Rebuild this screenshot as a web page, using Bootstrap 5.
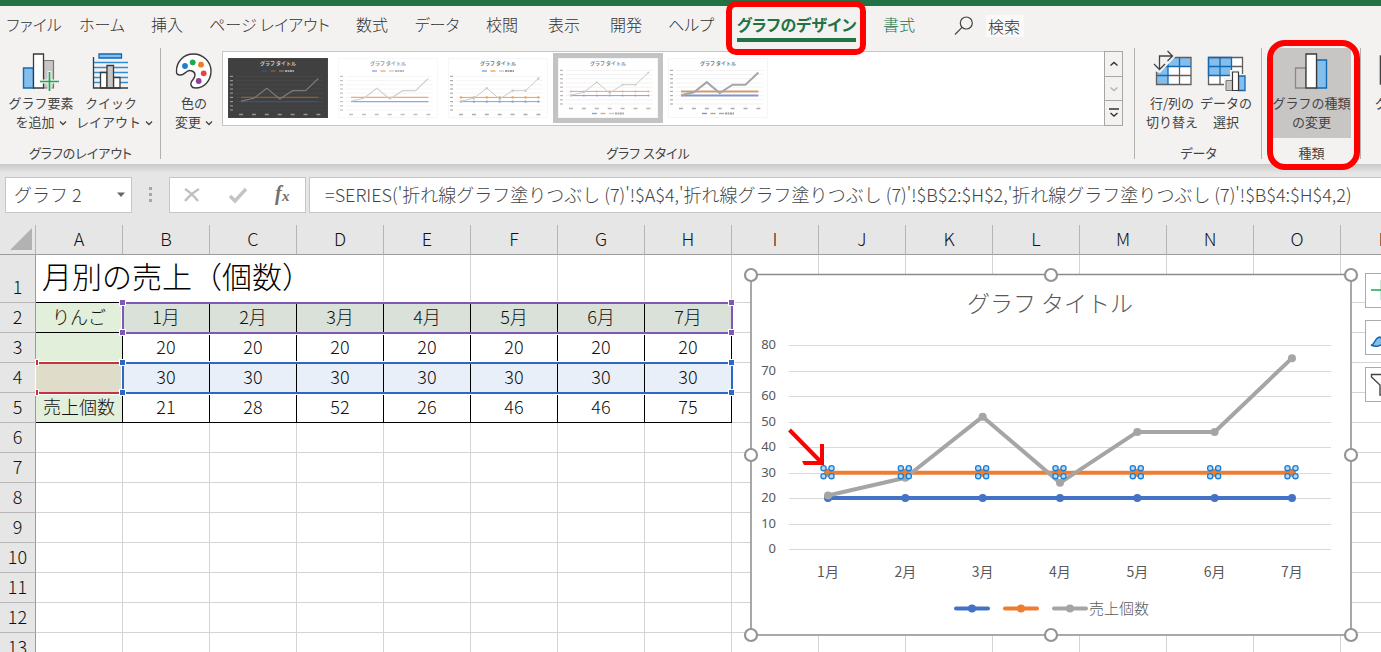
<!DOCTYPE html>
<html lang="ja">
<head>
<meta charset="utf-8">
<meta name="viewport" content="width=device-width, initial-scale=1">
<title>グラフのデザイン</title>
<link href="https://cdn.jsdelivr.net/npm/bootstrap@5.3.0/dist/css/bootstrap.min.css" rel="stylesheet">
<style>
:root{--green:#217346;--ink:#444;--line:#d4d4d4}
body{font-family:"Noto Sans CJK JP",sans-serif;font-weight:300;color:var(--ink);background:#fff}
.topbar{height:6px;background:var(--green)}
.tabs{height:42px;background:#f3f2f1;font-size:16px;font-feature-settings:"palt"}
.tabs li{flex:none;position:relative;text-align:center}
.tab-s{width:62px}.tab-m{width:68px}.tab-l{width:143px}
.tabs a{display:inline-block;color:#333;text-decoration:none;white-space:nowrap;line-height:28px;margin-top:4px}
.tabs a.accent{color:var(--green)}
.tabs a.current{font-weight:700;border-bottom:4px solid var(--green)}
.find{margin-left:24px;padding-top:5px;gap:12px}
.find input{width:38px;height:22px;padding:0 2px;border:0;border-radius:0;background:#faf9f8;font-size:16px;font-weight:300;line-height:22px}
.find input::placeholder{color:#333;opacity:1}
.mark-box{position:absolute;border:6px solid #f00;pointer-events:none;z-index:5}
.mark-tab{inset:-5px 2px -7px 1px;border-radius:10px}
.mark-group{inset:-8px 1px -6px 5px;border-radius:18px}
.ribbon{height:116px;background:#f3f2f1;font-size:13px;font-weight:400;font-feature-settings:"palt"}
.grp{position:relative;flex:none}
.grp:not(:last-child)::after{content:"";position:absolute;right:0;top:0;bottom:5px;width:1px;background:#b3b0ad}
.grp-title{line-height:22px;text-align:center;white-space:nowrap}
.tools-in{padding-left:6px}
.tools-far{padding-left:10px}
.tool{height:90px;border:0;background:none;padding:2px 0 7px;color:var(--ink);line-height:19px;white-space:nowrap}
.tool svg{display:block;margin:0 auto 1px;width:40px;height:42px}
.tool .chev{display:inline-block;width:8px;height:6px;margin:0 0 1px 4px}
.w-wide{width:70px}.w-slim{width:54px}
.tool.on{width:79px;background:#c8c6c4}
.gallery{height:75px;margin:3px 12px 0 1px;border:1px solid #c8c6c4;background:#fff;min-width:0}
.gallery .items{min-width:0;overflow:hidden}
.thumb{flex:none;width:110px;padding:0;border:5px solid transparent;background:none;height:70px;margin-top:1px}
.thumb.sel{border-color:#c3c3c3}
.thumb svg{display:block}
.spin{width:19px;flex:none;margin:-1px}
.spin button{flex:1;border:1px solid #a8a6a4;border-top-width:0;background:#f3f2f1;padding:0;line-height:0}
.spin button:first-child{border-top-width:1px}
.fbar{height:61px;background:linear-gradient(#c9c9c9,#e6e6e6 9px);padding:13px 0 12px 5px;font-size:18px}
.fbox{border:1px solid #c6c6c6;background:#fff;height:36px}
.fbar input{border:0;outline:0;background:none;color:var(--ink);padding:0 0 2px;min-width:0;font-weight:300}
.formula{padding-left:15px;margin-left:3px;min-width:0}
.namebox{width:127px}
.dots{width:37px}
.fx{width:137px}
.fx button{border:0;background:none;padding:0;width:36px;line-height:0}
.sheet{position:relative;overflow:hidden;background:#fff}
.cells{border-collapse:separate;border-spacing:0;table-layout:fixed;width:1428px;color:#111;font-size:18px;line-height:27px}
.cells th,.cells td{padding:0 0 2px;text-align:center;border:solid var(--line);border-width:0 1px 1px 0;height:30px;font-weight:300;white-space:nowrap}
.cells thead th{background:#e6e6e6;border-color:#9b9b9b;border-right-color:#b5b5b5}
.cells tbody th{background:#e6e6e6;border-right-color:#9b9b9b;border-bottom-color:#b8b8b8}
.cells .first td,.cells .first th{height:48px;vertical-align:bottom}
.cells td.heading{font-size:30px;line-height:40px;text-align:left;padding:0 0 0 6px;vertical-align:top!important;color:#000}
.cells .first td.edge,.cells td.data{border-bottom-color:#000}
.cells td.data{border-right-color:#000}
.cells td.name{background:#e2efda}
.cells td.month{background:#d9e1d9}
.cells td.hit{background:#e9eff9}
.cells td.key{background:#dfdcc9}
.corner svg{display:block;margin-left:10px}
.range{position:absolute;height:32px;border:2px solid;outline:1px solid #fff}
.range i{position:absolute;width:5px;height:5px;background:currentColor;outline:1px solid #fff}
.range i:nth-child(1){left:-4px;top:-4px}.range i:nth-child(2){left:-4px;bottom:-3px}
.range i:nth-child(3){right:-3px;top:-4px}.range i:nth-child(4){right:-3px;bottom:-3px}
.r-months{left:122px;top:77px;width:611px;color:#7f57b5}
.r-values{left:122px;top:137px;width:611px;color:#2e68c5}
.r-key{left:36px;top:137px;width:86px;color:#c03540;border-left:0;border-right:0}
.range.r-key i{left:0;width:2px}
.chart{position:absolute;left:740px;top:39px}
.chart text{fill:#595959}
.side{position:absolute;left:1365px;top:48px;gap:12px}
.side button{width:35px;height:35px;border:1px solid #ababab;background:#fff;padding:0}
</style>
</head>
<body class="vh-100 d-flex flex-column overflow-hidden">
<div class="topbar flex-shrink-0"></div>
<nav class="tabs d-flex flex-shrink-0">
  <ul class="list-unstyled d-flex m-0">
    <li class="tab-m"><a href="#">ファイル</a></li>
    <li class="tab-m"><a href="#">ホーム</a></li>
    <li class="tab-s"><a href="#">挿入</a></li>
    <li class="tab-l"><a href="#">ページ レイアウト</a></li>
    <li class="tab-s"><a href="#">数式</a></li>
    <li class="tab-m"><a href="#">データ</a></li>
    <li class="tab-s"><a href="#">校閲</a></li>
    <li class="tab-s"><a href="#">表示</a></li>
    <li class="tab-s"><a href="#">開発</a></li>
    <li class="tab-m"><a href="#">ヘルプ</a></li>
    <li class="tab-l"><a href="#" class="accent current">グラフのデザイン</a><span class="mark-box mark-tab"></span></li>
    <li class="tab-s"><a href="#" class="accent">書式</a></li>
  </ul>
  <div class="find d-flex align-items-start">
    <svg width="20" height="22" viewBox="0 0 20 22" fill="none" stroke="#444" stroke-width="1.2" class="mt-1"><circle cx="12.300" cy="8" r="6"/><path d="M8 12.300 1 19.500"/></svg>
    <input type="text" placeholder="検索" aria-label="検索" class="mt-1">
  </div>
</nav>

<div class="ribbon d-flex flex-shrink-0">
  <section class="grp d-flex flex-column justify-content-between" style="width:161px">
    <div class="d-flex tools-in">
      <button class="tool w-wide"><svg viewBox="0 -2 40 42"><path d="M2.500 16h10v20h-10z" fill="#83beec" stroke="#1268b3" stroke-width="1.400"/><path d="M22.500 8.500h10V36h-10z" fill="#c8c6c4" stroke="#797774" stroke-width="1.200"/><path d="M12.500 2h10v34h-10z" fill="#fff" stroke="#3b3a39" stroke-width="1.300"/><path d="M28.500 19v20M18.500 29.500h20" stroke="#f3f2f1" stroke-width="4"/><path d="M28.500 20v19M19 29.500h19" stroke="#18ab50" stroke-width="1.700"/></svg>グラフ要素<br>を追加<svg class="chev" viewBox="0 0 8 6" fill="none" stroke="#444" stroke-width="1.300"><path d="m1 1.500 3 3 3-3"/></svg></button>
      <button class="tool w-wide"><svg viewBox="0 -2 40 42"><path d="M3 10.500h34M3 15.500h34M3 20.500h34M3 25.500h34M3 30.500h34" stroke="#2e8fd8" stroke-width="1.500"/><path d="M8 2h22.500v4H8z" fill="#83beec" stroke="#1268b3" stroke-width="1.300"/><g stroke="#3b3a39" stroke-width="1.300" fill="#fff"><path d="M9.500 20.500h6.500V36H9.500zM22.500 25.500h6.500V36h-6.500z"/><path d="M16 13.500h6.500V36H16z" fill="#c8c6c4"/><path d="M2.500 5v31H37" fill="none"/></g></svg>クイック<br>レイアウト<svg class="chev" viewBox="0 0 8 6" fill="none" stroke="#444" stroke-width="1.300"><path d="m1 1.500 3 3 3-3"/></svg></button>
    </div>
    <div class="grp-title">グラフのレイアウト</div>
  </section>

  <section class="grp d-flex flex-column justify-content-between flex-grow-1 flex-shrink-1" style="min-width:0">
    <div class="d-flex tools-in">
      <button class="tool w-slim"><svg viewBox="0 -2 40 42"><path d="M2.500 20C2 10 9.500 2 19.500 2 29 2 37 9.500 37 19c0 10-7 17-15.500 17-4.500 0-5.500-3.500-4-6.500 1.500-2 3.500-3.500 3.500-6.500 0-4-5-5.500-8-3.500-2.500 1.800-4 3.500-6.500 3.500-2.500.2-4-.8-4-3z" fill="#fff" stroke="#3b3a39" stroke-width="1.400"/><circle cx="11" cy="14" r="2.900" fill="#1e7fd0"/><circle cx="18.700" cy="10.300" r="2.900" fill="#18ab50"/><circle cx="27" cy="12.700" r="2.900" fill="#ef7d22"/><circle cx="29.700" cy="21.300" r="2.900" fill="#f03e3e"/><circle cx="24.700" cy="29" r="2.900" fill="#8e3f9e"/></svg>色の<br>変更<svg class="chev" viewBox="0 0 8 6" fill="none" stroke="#444" stroke-width="1.300"><path d="m1 1.500 3 3 3-3"/></svg></button>
      <div class="gallery d-flex flex-grow-1">
        <div class="items d-flex flex-grow-1" id="styles"></div>
        <div class="spin d-flex flex-column">
          <button aria-label="前へ"><svg width="10" height="6" fill="none" stroke="#333" stroke-width="1.400"><path d="m1.500 4.500 3.500-3 3.500 3"/></svg></button>
          <button aria-label="次へ"><svg width="10" height="6" fill="none" stroke="#b5b3b1" stroke-width="1.400"><path d="m1.500 1.500 3.500 3 3.500-3"/></svg></button>
          <button aria-label="その他"><svg width="10" height="10" fill="none" stroke="#333" stroke-width="1.400"><path d="M0 1h10M1.500 5l3.500 3 3.500-3"/></svg></button>
        </div>
      </div>
    </div>
    <div class="grp-title">グラフ スタイル</div>
  </section>

  <section class="grp d-flex flex-column justify-content-between" style="width:127px">
    <div class="d-flex tools-far">
      <button class="tool w-slim"><svg viewBox="0 0 40 42"><path d="M4.500 7.500h34.500V34.500H4.500z" fill="#fff"/><path d="M4.500 7.500h34.500v9H16v18H4.500z" fill="#83beec"/><path d="M4.500 34.500V7.500H39v27zM27.500 16.500v18M16 25.500h23" fill="none" stroke="#605e5c" stroke-width="1.300"/><path d="M39 16.500H16v18M27.500 8v8.500M5 25.500h11M16 8v8.500H5" fill="none" stroke="#1268b3" stroke-width="1.300"/><path d="M0 0h18l6 6-16 17-8-3z" fill="#f3f2f1"/><path d="M7.500 19V6h13M2 14l5.500 5.500L13 14M15.500 1l5 5-5 5" fill="none" stroke="#444" stroke-width="1.300"/></svg>行/列の<br>切り替え</button>
      <button class="tool w-slim"><svg viewBox="0 0 40 42"><path d="M2.500 7.500h34v27h-34z" fill="#fff"/><path d="M2.500 7.500h23v18h-23z" fill="#83beec"/><path d="M36.500 25V7.500H2.500v27H20M25.500 16.500h11M14 25v9" fill="none" stroke="#605e5c" stroke-width="1.300"/><path d="M2.500 7.500h23v18h-23zM14 7.500v18M2.500 16.500h23" fill="none" stroke="#1268b3" stroke-width="1.300"/><path d="M18 28h6v-8h9v4h7v18H18z" fill="#f3f2f1"/><path d="M20 30.500h6.500v10H20z" fill="#c8c6c4" stroke="#797774"/><path d="M32.500 26h6.500v14.500h-6.500z" fill="#83beec" stroke="#1268b3" stroke-width="1.300"/><path d="M26.500 22h6v18.500h-6z" fill="#fff" stroke="#3b3a39" stroke-width="1.200"/></svg>データの<br>選択</button>
    </div>
    <div class="grp-title">データ</div>
  </section>

  <section class="grp d-flex flex-column justify-content-between" style="width:99px">
    <div class="d-flex tools-far"><button class="tool on"><svg viewBox="0 0 40 42"><path d="M3.500 18h10.500v20H3.500z" fill="#c8c6c4" stroke="#8a8886" stroke-width="1.300"/><path d="M24.500 10h10v28h-10z" fill="#83beec" stroke="#1268b3" stroke-width="1.400"/><path d="M14 4h10.500v34H14z" fill="#fff" stroke="#3b3a39" stroke-width="1.300"/></svg>グラフの種類<br>の変更</button></div>
    <div class="grp-title">種類</div>
    <span class="mark-box mark-group"></span>
  </section>

  <section class="grp overflow-hidden tools-far" style="width:20px">
    <button class="tool ps-1 text-start"><svg class="ms-0" viewBox="0 0 40 42"><path d="M5.500 6h30v28h-30z" fill="#fff" stroke="#444" stroke-width="1.600"/></svg>グラフの<br>&nbsp;</button>
  </section>
</div>

<div class="fbar d-flex flex-shrink-0">
  <div class="fbox namebox d-flex align-items-center ps-2 pe-1">
    <input class="flex-grow-1 w-100" value="グラフ 2" aria-label="名前ボックス">
    <svg width="12" height="6" class="flex-shrink-0"><path d="M2 .5h8l-4 4.500z" fill="#666"/></svg>
  </div>
  <svg class="dots flex-shrink-0" height="36" viewBox="0 0 37 36"><path d="M17 10h3v3h-3zM17 16h3v3h-3zM17 22h3v3h-3z" fill="#a6a6a6"/></svg>
  <div class="fbox fx d-flex align-items-center justify-content-between px-1 flex-shrink-0">
    <button aria-label="キャンセル"><svg width="18" height="18" fill="none" stroke="#c0c0c0" stroke-width="2.400"><path d="M2 3c5 3 9 7 13 12M16 3C11 6 6 10 2 15"/></svg></button>
    <button aria-label="入力"><svg width="18" height="18" fill="none" stroke="#c4c4c4" stroke-width="3.400"><path d="m1 10 5 5L17 3"/></svg></button>
    <button aria-label="関数の挿入"><svg width="20" height="24" viewBox="0 0 20 24"><text x="2" y="17" font-family="Liberation Serif" font-style="italic" font-weight="700" font-size="20" fill="#707070">f</text><text x="9" y="18" font-family="Liberation Serif" font-style="italic" font-weight="700" font-size="15" fill="#707070">x</text></svg></button>
  </div>
  <div class="fbox formula flex-grow-1 d-flex overflow-hidden border-end-0">
    <input class="w-100" aria-label="数式バー" value="=SERIES('折れ線グラフ塗りつぶし (7)'!$A$4,'折れ線グラフ塗りつぶし (7)'!$B$2:$H$2,'折れ線グラフ塗りつぶし (7)'!$B$4:$H$4,2)">
  </div>
</div>

<main class="sheet flex-grow-1">
  <table class="cells" id="cells"></table>
  <div class="range r-key"><i></i><i></i></div>
  <div class="range r-months"><i></i><i></i><i></i><i></i></div>
  <div class="range r-values"><i></i><i></i><i></i><i></i></div>
  <svg class="chart" id="chart" width="622" height="382" viewBox="0 0 622 382"></svg>
  <div class="side d-flex flex-column">
    <button aria-label="グラフ要素"><svg width="33" height="33" stroke="#18ab50" stroke-width="1.500"><path d="M5 16h22M15.500 6v20"/></svg></button>
    <button aria-label="グラフ スタイル"><svg width="33" height="33"><path d="M5 24c4 0 3-7 9-8l4 4c-2 6-9 6-13 4z" fill="#83beec" stroke="#1268b3" stroke-width="1.400"/><path d="m15 16 11-11 3 3-11 12z" fill="#fff" stroke="#444"/></svg></button>
    <button aria-label="グラフ フィルター"><svg width="33" height="33"><path d="M5.500 6.500h22V9L19 17v10h-5V17L5.500 9z" fill="#fff" stroke="#444" stroke-width="1.400"/></svg></button>
  </div>
</main>

<script>
const series = [[20,20,20,20,20,20,20],[30,30,30,30,30,30,30],[21,28,52,26,46,46,75]];
const months = [1,2,3,4,5,6,7].map(m => m + '月');
const colors = ['#4472c4','#ed7d31','#a5a5a5'];

/* worksheet */
const rows = {2:['りんご',...months],3:['',...series[0]],4:['',...series[1]],5:['売上個数',...series[2]]};
let t = '<colgroup><col style="width:36px">' + '<col style="width:87px">'.repeat(16) + '</colgroup><thead><tr><th class="corner"><svg width="22" height="22"><path d="M22 0v22H0z" fill="#b2b2b2"/></svg></th>';
for (const c of 'ABCDEFGHIJKLMNOP') t += `<th scope="col">${c}</th>`;
t += '</tr></thead><tbody><tr class="first"><th scope="row">1</th><td class="heading edge" colspan="4">月別の売上（個数）</td>';
for (let c = 4; c < 16; c++) t += `<td class="${c < 8 ? 'edge' : ''}"></td>`;
t += '</tr>';
for (let r = 2; r < 15; r++) {
  t += `<tr><th scope="row">${r}</th>`;
  for (let c = 0; c < 16; c++) {
    const d = rows[r] && c < 8;
    const k = !d ? '' : 'data ' + (c === 0 ? (r === 4 ? 'key' : 'name') : r === 2 ? 'month' : r === 4 ? 'hit' : '');
    t += `<td class="${k}">${d ? rows[r][c] : ''}</td>`;
  }
  t += '</tr>';
}
document.getElementById('cells').innerHTML = t + '</tbody>';

/* main chart */
const X = i => 88 + 77.33 * i, Y = v => 285 - 2.545 * v;
let s = '<rect x="11" y="10.500" width="600" height="360.500" fill="#fff" stroke="#8c8c8c" stroke-width="1.500"/><text x="310" y="48" font-size="23" text-anchor="middle">グラフ タイトル</text>';
for (let v = 0; v <= 80; v += 10) {
  const y = Math.round(Y(v)) + .5;
  s += `<path d="M49 ${y}H591" stroke="#d9d9d9"/><text x="36" y="${y + 3.5}" font-size="13" font-family="Noto Sans" font-weight="400" text-anchor="end">${v}</text>`;
}
months.forEach((m, i) => s += `<text x="${X(i)}" y="313" font-size="14" font-weight="400" text-anchor="middle">${m}</text>`);
series.forEach((d, n) => {
  s += `<polyline points="${d.map((v, i) => X(i) + ',' + Y(v)).join(' ')}" fill="none" stroke="${colors[n]}" stroke-width="4" stroke-linejoin="round"/>`;
  d.forEach((v, i) => s += `<circle cx="${X(i)}" cy="${Y(v)}" r="4" fill="${colors[n]}"/>`);
});
series[1].forEach((v, i) => {
  s += `<path d="M${X(i) - 4} ${Y(v)}l4-4 4 4-4 4z" fill="${colors[1]}"/>`;
  [[-4,-4],[4,-4],[-4,4],[4,4]].forEach(([a, b]) =>
    s += `<circle cx="${X(i) - .5 + a}" cy="${Y(v) - .5 + b}" r="2.600" fill="#b5d9f5" stroke="#1a7fd4" stroke-width="1.300"/>`);
});
[[214,0],[263,1],[312,2]].forEach(([x, n]) => s += `<path d="M${x + 2} 344.500h32" stroke="${colors[n]}" stroke-width="4" stroke-linecap="round"/><circle cx="${x + 18}" cy="344.500" r="4" fill="${colors[n]}"/>`);
s += '<text x="349" y="350" font-size="15">売上個数</text>';
[[11,11],[311,11],[611,11],[11,191],[611,191],[11,371],[311,371],[611,371]].forEach(([x, y]) => s += `<circle cx="${x}" cy="${y}" r="6" fill="#fff" stroke="#949494" stroke-width="2.200"/>`);
s += '<path d="M49.500 166 81 198" stroke="#f00" stroke-width="4"/><path d="M80 180h4v21H64l-2-4h18z" fill="#f00"/>';
document.getElementById('chart').innerHTML = s;

/* gallery thumbnails */
const styles = [
  {bg:'#404040', grid:'#4c4c4c', ink:'#ccc', low:0, w:1.2, cols:['#3d5188','#94583a','#7c7c7c']},
  {bg:'#fff', grid:'#f0f0f0', ink:'#999', low:0, w:1.2, cols:['#8fa9dc','#f6a67c','#d0d0d0']},
  {bg:'#fff', grid:'#f0f0f0', ink:'#777', low:0, w:1, dot:1.2, cols:['#7ea6e0','#f5a04f','#cacaca']},
  {bg:'#fff', grid:'#ececec', ink:'#888', low:1, w:1, dot:1, sel:1, cols:['#7ea6e0','#f3a272','#cacaca']},
  {bg:'#fff', grid:'#ececec', ink:'#777', low:1, w:2, cols:['#7f97c8','#d29a72','#a6a6a6']}];
document.getElementById('styles').innerHTML = styles.map((o, n) => {
  const base = o.low ? 46 : 52, x = i => 13 + 12.9 * i, y = v => base - .42 * v;
  let g = `<rect width="100" height="60" fill="${o.bg}"/><rect x=".5" y=".5" width="99" height="59" fill="none" stroke="${o.grid}" stroke-width=".5"/><text x="50" y="7" font-size="5" font-weight="700" text-anchor="middle" fill="${o.ink}">グラフ タイトル</text>`;
  for (let v = 0; v <= 80; v += 10) g += `<path d="M8 ${y(v)}H95" stroke="${o.grid}" stroke-width=".7"/><path d="M2 ${y(v)}h3" stroke="${o.ink}" stroke-width="1.200" opacity=".6"/>`;
  for (let i = 0; i < 7; i++) g += `<path d="M${x(i) - 2} ${base + 4.500}h4" stroke="${o.ink}" stroke-width="1.500" opacity=".6"/>`;
  series.forEach((d, k) => {
    g += `<polyline points="${d.map((v, i) => x(i) + ',' + y(v)).join(' ')}" fill="none" stroke="${o.cols[k]}" stroke-width="${o.w}"/>`;
    if (o.dot) d.forEach((v, i) => g += `<circle cx="${x(i)}" cy="${y(v)}" r="${o.dot}" fill="${o.cols[k]}"/>`);
    g += `<path d="M${34 + 8.500 * k} ${o.low ? 55.500 : 13}h5" stroke="${o.cols[k]}" stroke-width="1.400"/>`;
  });
  g += `<path d="M57 ${o.low ? 55.500 : 13}h9" stroke="${o.ink}" stroke-width="2" stroke-dasharray="2 .5" opacity=".7"/>`;
  return `<button class="thumb${o.sel ? ' sel' : ''}" aria-label="スタイル ${n + 1}"><svg width="100" height="60" viewBox="0 0 100 60">${g}</svg></button>`;
}).join('');
</script>
<script src="https://cdn.jsdelivr.net/npm/bootstrap@5.3.0/dist/js/bootstrap.bundle.min.js"></script>
</body>
</html>
